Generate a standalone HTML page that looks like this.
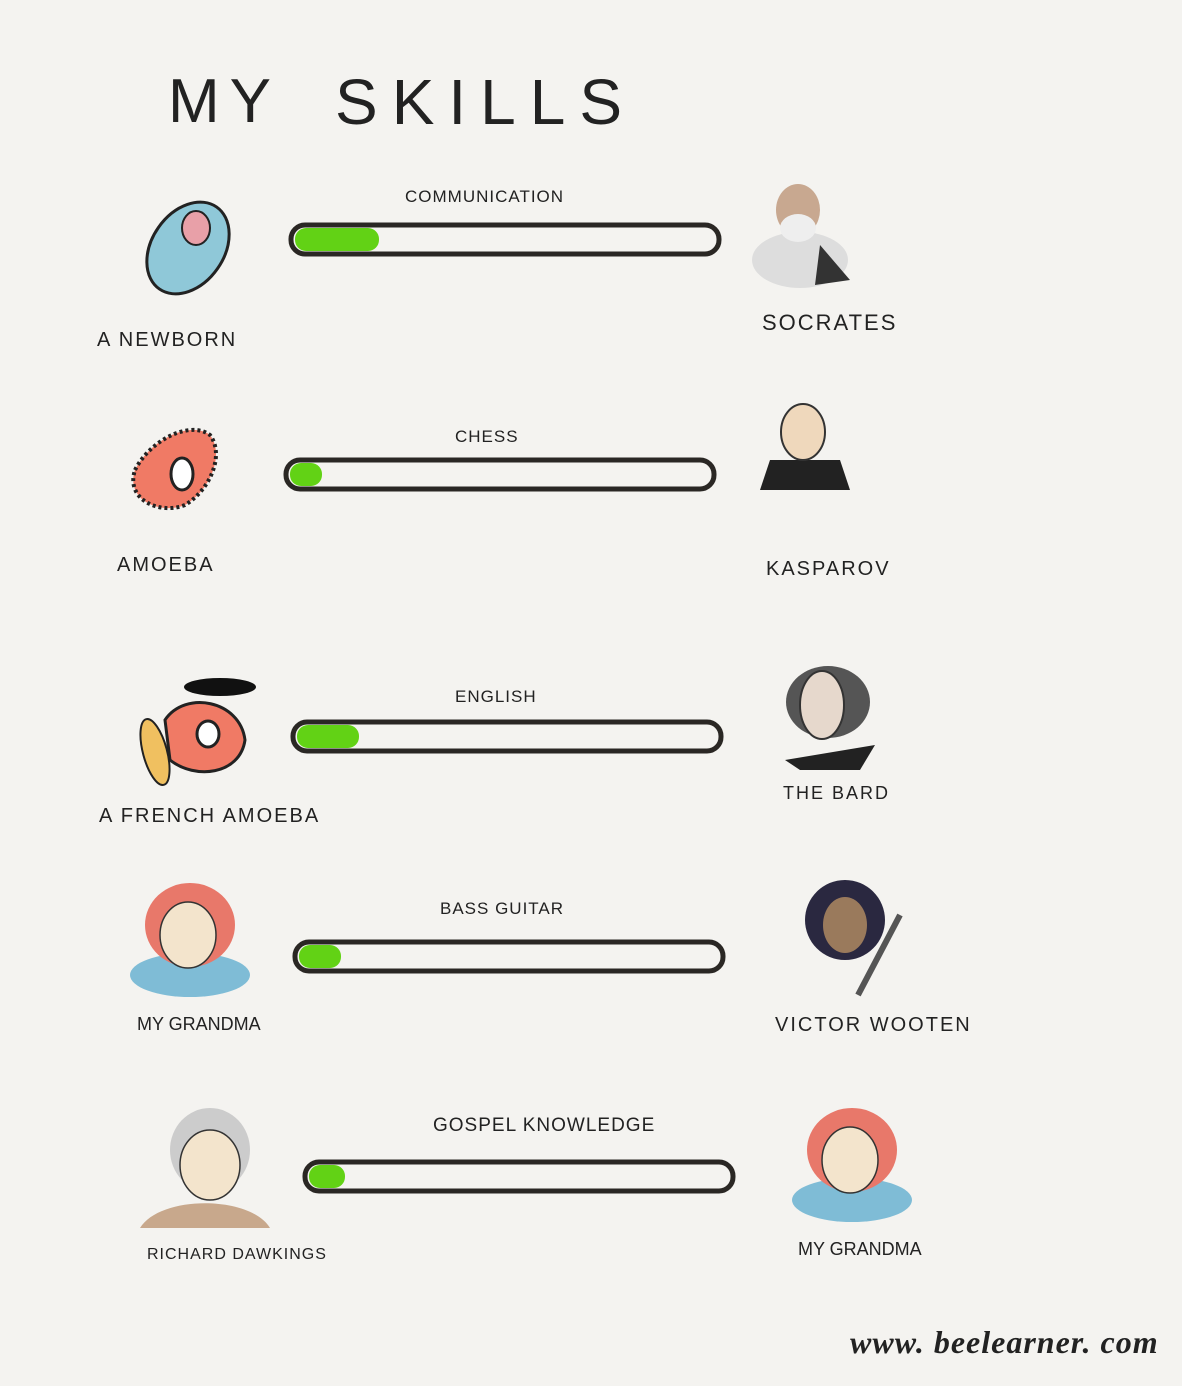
<!DOCTYPE html>
<html><head><meta charset="utf-8"><style>
html,body{margin:0;padding:0;background:#f4f3f0;}
body{width:1182px;height:1386px;overflow:hidden;position:relative;}
svg{position:absolute;left:0;top:0;}
text{font-family:"Liberation Sans",sans-serif;fill:#222;}
</style></head><body>
<svg width="1182" height="1386" viewBox="0 0 1182 1386">
<rect width="1182" height="1386" fill="#f4f3f0"/>
<text x="168" y="122" font-size="62" letter-spacing="10" style="font-weight:300">MY</text>
<text x="335" y="124" font-size="64" letter-spacing="14" style="font-weight:300">SKILLS</text>

<g stroke="#2a2724" stroke-width="5" fill="#f4f3f0">
<rect x="291" y="225" width="428" height="29" rx="14"/>
<rect x="286" y="460" width="428" height="29" rx="14"/>
<rect x="293" y="722" width="428" height="29" rx="14"/>
<rect x="295" y="942" width="428" height="29" rx="14"/>
<rect x="305" y="1162" width="428" height="29" rx="14"/>
</g>
<g fill="#62d215">
<rect x="295" y="228" width="84" height="23" rx="11"/>
<rect x="290" y="463" width="32" height="23" rx="11"/>
<rect x="297" y="725" width="62" height="23" rx="11"/>
<rect x="299" y="945" width="42" height="23" rx="11"/>
<rect x="309" y="1165" width="36" height="23" rx="11"/>
</g>

<g font-size="17" letter-spacing="1">
<text x="405" y="202">COMMUNICATION</text>
<text x="455" y="442">CHESS</text>
<text x="455" y="702">ENGLISH</text>
<text x="440" y="914">BASS  GUITAR</text>
<text x="433" y="1131" font-size="19">GOSPEL  KNOWLEDGE</text>
</g>
<g font-size="20" letter-spacing="2">
<text x="97" y="346">A NEWBORN</text>
<text x="762" y="330" font-size="22">SOCRATES</text>
<text x="117" y="571">AMOEBA</text>
<text x="766" y="575">KASPAROV</text>
<text x="99" y="822">A FRENCH  AMOEBA</text>
<text x="783" y="799" font-size="18">THE  BARD</text>
<text x="137" y="1030" font-size="18" letter-spacing="0">MY GRANDMA</text>
<text x="775" y="1031">VICTOR  WOOTEN</text>
<text x="147" y="1259" font-size="16" letter-spacing="1">RICHARD DAWKINGS</text>
<text x="798" y="1255" font-size="18" letter-spacing="0">MY GRANDMA</text>
</g>
<text x="850" y="1353" font-size="32" letter-spacing="1" font-style="italic" font-weight="bold" style="font-family:'Liberation Serif',serif">www. beelearner. com</text>

<ellipse cx="188" cy="248" rx="36" ry="50" transform="rotate(35 188 248)" fill="#8fc8d8" stroke="#222" stroke-width="3"/>
<ellipse cx="196" cy="228" rx="14" ry="17" fill="#e8a0a8" stroke="#222" stroke-width="2"/>
<ellipse cx="800" cy="260" rx="48" ry="28" fill="#ddd"/>
<path d="M820 245 L850 280 L815 285Z" fill="#333"/>
<ellipse cx="798" cy="210" rx="22" ry="26" fill="#c8a890"/>
<ellipse cx="798" cy="228" rx="18" ry="14" fill="#eee"/>
<path d="M135 470 C150 440 190 420 210 435 C225 455 210 490 185 505 C160 515 125 500 135 470Z" fill="#f07a65" stroke="#222" stroke-width="4" stroke-dasharray="3 3"/>
<ellipse cx="182" cy="474" rx="11" ry="16" fill="#fff" stroke="#222" stroke-width="3"/>
<path d="M760 490 L850 490 L840 460 L770 460Z" fill="#222"/>
<ellipse cx="803" cy="432" rx="22" ry="28" fill="#efd8bc" stroke="#333" stroke-width="2"/>
<ellipse cx="220" cy="687" rx="36" ry="9" fill="#111"/>
<path d="M165 720 C185 690 240 700 245 740 C240 775 195 780 170 760Z" fill="#f07a65" stroke="#222" stroke-width="3"/>
<ellipse cx="155" cy="752" rx="12" ry="34" transform="rotate(-15 155 752)" fill="#f0c060" stroke="#222" stroke-width="2"/>
<ellipse cx="208" cy="734" rx="11" ry="13" fill="#fff" stroke="#222" stroke-width="3"/>
<path d="M785 760 L875 745 L860 770 L800 770Z" fill="#222"/>
<ellipse cx="828" cy="702" rx="42" ry="36" fill="#555"/>
<ellipse cx="822" cy="705" rx="22" ry="34" fill="#e6d8cc" stroke="#333" stroke-width="2"/>
<ellipse cx="190" cy="975" rx="60" ry="22" fill="#7fbcd6"/>
<ellipse cx="190" cy="925" rx="45" ry="42" fill="#e8786a"/>
<ellipse cx="188" cy="935" rx="28" ry="33" fill="#f3e4cc" stroke="#333" stroke-width="1.5"/>
<ellipse cx="845" cy="920" rx="40" ry="40" fill="#2a2840"/>
<ellipse cx="845" cy="925" rx="22" ry="28" fill="#9a7a5c"/>
<line x1="900" y1="915" x2="858" y2="995" stroke="#555" stroke-width="6"/>
<path d="M140 1228 C160 1195 250 1195 270 1228Z" fill="#c8a88c"/>
<ellipse cx="210" cy="1150" rx="40" ry="42" fill="#ccc"/>
<ellipse cx="210" cy="1165" rx="30" ry="35" fill="#f3e4cc" stroke="#333" stroke-width="1.5"/>
<ellipse cx="852" cy="1200" rx="60" ry="22" fill="#7fbcd6"/>
<ellipse cx="852" cy="1150" rx="45" ry="42" fill="#e8786a"/>
<ellipse cx="850" cy="1160" rx="28" ry="33" fill="#f3e4cc" stroke="#333" stroke-width="1.5"/>
</svg>
</body></html>
